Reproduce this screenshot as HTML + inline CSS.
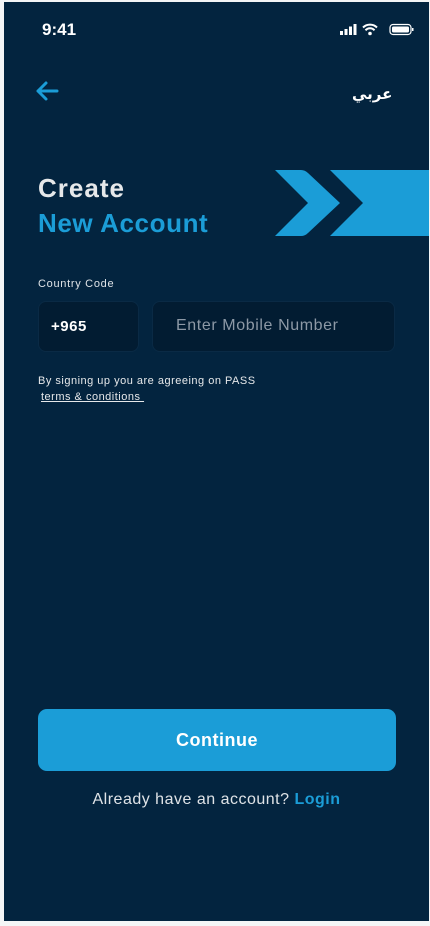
<!DOCTYPE html>
<html><head><meta charset="utf-8"><style>
*{margin:0;padding:0;box-sizing:border-box}
body{width:430px;height:926px;background:#f4f5f6;position:relative;overflow:hidden;font-family:"Liberation Sans","DejaVu Sans",sans-serif}
.p{position:absolute;left:4px;top:2px;width:425px;height:919px;background:#03243f;overflow:hidden}
.a{position:absolute}
</style></head><body>
<div class="p">
<div class="a" style="left:38px;top:18px;color:#fff;font-weight:bold;font-size:17px">9:41</div>
<svg class="a" style="left:333px;top:20px" width="80" height="16" viewBox="0 0 80 16">
<rect x="3" y="9" width="3" height="4" fill="#fff"/><rect x="7.5" y="7" width="3" height="6" fill="#fff"/><rect x="12" y="4.5" width="3" height="8.5" fill="#fff"/><rect x="16.5" y="2" width="3" height="11" fill="#fff"/>
<path d="M26 5.5a10 10 0 0 1 14 0M28.5 8.3a6 6 0 0 1 9 0" stroke="#fff" stroke-width="2" fill="none"/><circle cx="33" cy="11.5" r="1.8" fill="#fff"/>
<rect x="53" y="2.5" width="21" height="10" rx="3" stroke="#fff" stroke-width="1.2" fill="none"/><rect x="55" y="4.5" width="17" height="6" rx="1.5" fill="#fff"/><rect x="75" y="6" width="1.5" height="3" fill="#fff"/>
</svg>
<svg class="a" style="left:30px;top:78px" width="26" height="22" viewBox="0 0 26 22"><path d="M23 11H4M12 3L4 11l8 8" stroke="#1b9dd7" stroke-width="3" fill="none" stroke-linecap="round" stroke-linejoin="round"/></svg>
<div class="a" style="left:348px;top:83px;color:#fff;font-size:15px;font-weight:bold;font-family:'DejaVu Sans',sans-serif">عربي</div>
<svg class="a" style="left:271px;top:168px" width="160" height="66" viewBox="0 0 160 66">
<path d="M0 0H26Q30 0 33 3L65 33 33 63Q30 66 26 66H0L33 33Z" fill="#1b9dd7"/>
<path d="M55 0H160V66H55L88 33Z" fill="#1b9dd7"/>
</svg>
<div class="a" style="left:34px;top:171px;color:#e6e8ea;font-weight:bold;font-size:26px;letter-spacing:1px">Create</div>
<div class="a" style="left:34px;top:206px;color:#1b9dd7;font-weight:bold;font-size:26px;letter-spacing:0.6px">New Account</div>
<div class="a" style="left:34px;top:276px;color:#dfe3e7;font-size:11px;letter-spacing:0.7px">Country Code</div>
<div class="a" style="left:34px;top:299px;width:101px;height:51px;background:#021c32;border-radius:8px;border:1px solid #0a2a45"></div>
<div class="a" style="left:47px;top:316px;color:#fff;font-weight:bold;font-size:15px;letter-spacing:0.5px">+965</div>
<div class="a" style="left:148px;top:299px;width:243px;height:51px;background:#021c32;border-radius:8px;border:1px solid #0a2a45"></div>
<div class="a" style="left:172px;top:315px;color:#8d99a6;font-size:16px;letter-spacing:0.6px">Enter Mobile Number</div>
<div class="a" style="left:34px;top:373px;color:#e6e8ea;font-size:11px;letter-spacing:0.5px">By signing up you are agreeing on PASS</div>
<div class="a" style="left:37px;top:389px;color:#e6e8ea;font-size:11px;letter-spacing:0.5px;text-decoration:underline">terms &amp; conditions&nbsp;</div>
<div class="a" style="left:34px;top:707px;width:358px;height:62px;background:#1b9dd7;border-radius:9px;color:#fff;font-size:18px;font-weight:bold;text-align:center;line-height:62px;letter-spacing:0.5px">Continue</div>
<div class="a" style="left:0;top:789px;width:425px;text-align:center;color:#dfe3e7;font-size:16px;letter-spacing:0.5px">Already have an account? <span style="color:#1b9dd7;font-weight:bold">Login</span></div>
</div>
</body></html>
